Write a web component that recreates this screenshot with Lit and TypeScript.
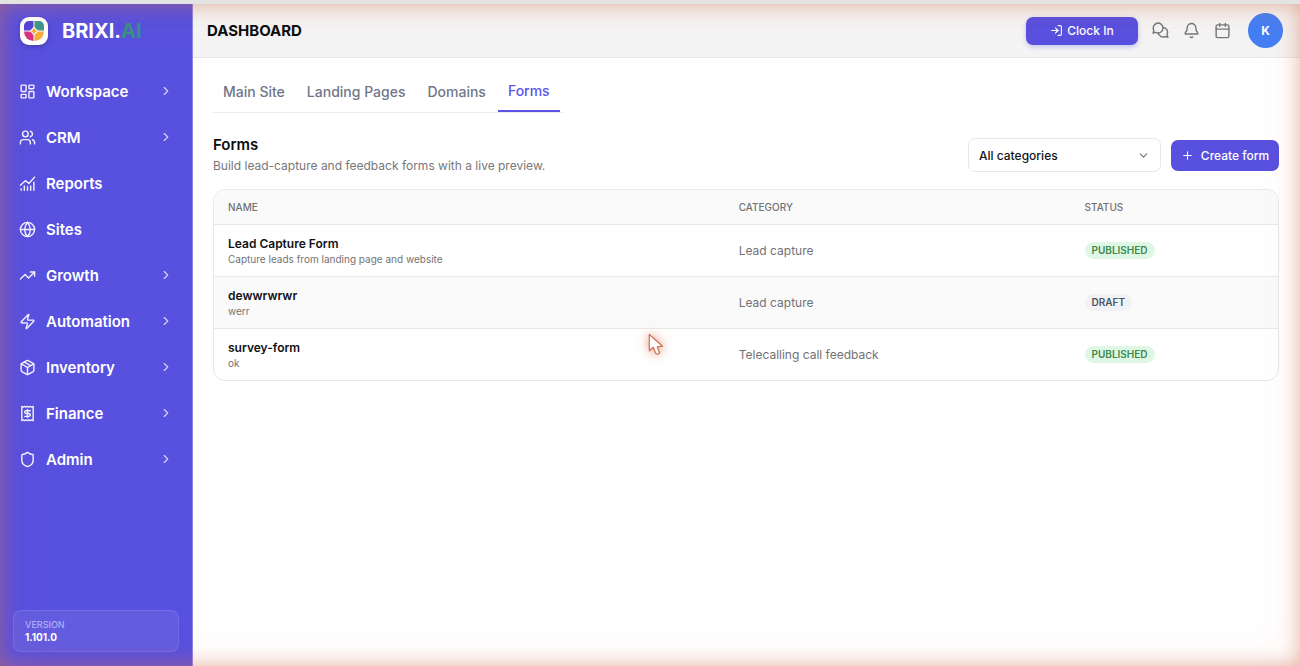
import { LitElement, html, svg, css } from "lit";
import { customElement, property, state } from "lit/decorators.js";
import { classMap } from "lit/directives/class-map.js";

const icons: Record<string, unknown> = {
  workspace: svg`<rect width="7" height="9" x="3" y="3" rx="1"/><rect width="7" height="5" x="14" y="3" rx="1"/><rect width="7" height="9" x="14" y="12" rx="1"/><rect width="7" height="5" x="3" y="16" rx="1"/>`,
  crm: svg`<path d="M16 21v-2a4 4 0 0 0-4-4H6a4 4 0 0 0-4 4v2"/><circle cx="9" cy="7" r="4"/><path d="M22 21v-2a4 4 0 0 0-3-3.87"/><path d="M16 3.13a4 4 0 0 1 0 7.75"/>`,
  reports: svg`<path d="M2 14.5 9 8l5 4 8-9"/><path d="M3 21.500v-2M7.500 21.500v-6M12 21.500v-5M16.500 21.500v-6M21 21.500V10"/>`,
  sites: svg`<circle cx="12" cy="12" r="10"/><path d="M12 2a14.5 14.5 0 0 0 0 20 14.500 14.500 0 0 0 0-20"/><path d="M2 12h20"/>`,
  growth: svg`<path d="M22 7 13.500 15.500l-5-5L2 17"/><path d="M16 7h6v6"/>`,
  automation: svg`<path d="M4 14a1 1 0 0 1-.78-1.630l9.900-10.200a.5.5 0 0 1 .86.460l-1.920 6.020A1 1 0 0 0 13 10h7a1 1 0 0 1 .78 1.630l-9.900 10.200a.5.5 0 0 1-.86-.460l1.920-6.020A1 1 0 0 0 11 14z"/>`,
  inventory: svg`<path d="M11 21.730a2 2 0 0 0 2 0l7-4A2 2 0 0 0 21 16V8a2 2 0 0 0-1-1.730l-7-4a2 2 0 0 0-2 0l-7 4A2 2 0 0 0 3 8v8a2 2 0 0 0 1 1.730z"/><path d="M12 22V12"/><path d="M3.290 7 12 12l8.710-5"/><path d="m7.500 4.270 9 5.150"/>`,
  finance: svg`<path d="M4 2v20l2-1 2 1 2-1 2 1 2-1 2 1 2-1 2 1V2l-2 1-2-1-2 1-2-1-2 1-2-1-2 1Z"/><path d="M16 8h-6a2 2 0 1 0 0 4h4a2 2 0 1 1 0 4H8"/><path d="M12 17.500v-11"/>`,
  admin: svg`<path d="M20 13c0 5-3.500 7.500-7.660 8.950a1 1 0 0 1-.67-.010C7.500 20.500 4 18 4 13V6a1 1 0 0 1 1-1c2 0 4.500-1.200 6.240-2.720a1.170 1.170 0 0 1 1.520 0C14.510 3.810 17 5 19 5a1 1 0 0 1 1 1z"/>`,
  right: svg`<path d="m9 18 6-6-6-6"/>`,
  down: svg`<path d="m6 9 6 6 6-6"/>`,
  plus: svg`<path d="M5 12h14M12 5v14"/>`,
  login: svg`<path d="m10 17 5-5-5-5"/><path d="M15 12H3"/><path d="M15 3h4a2 2 0 0 1 2 2v14a2 2 0 0 1-2 2h-4"/>`,
  chat: svg`<path d="M15.500 8.500A6.900 6.900 0 1 0 2.700 12L1.500 15.800l3.900-1.100A6.900 6.900 0 0 0 15.500 8.500Z"/><path d="M15.400 7.700a6.900 6.900 0 0 1 5.900 10.100l1.200 3.800-3.900-1.100A6.900 6.900 0 0 1 8.700 15.400"/>`,
  bell: svg`<path d="M10.270 21a2 2 0 0 0 3.460 0"/><path d="M3.260 15.330A1 1 0 0 0 4 17h16a1 1 0 0 0 .74-1.670C19.410 13.960 18 12.500 18 8A6 6 0 0 0 6 8c0 4.500-1.410 5.960-2.740 7.330"/>`,
  calendar: svg`<path d="M8 2v4M16 2v4"/><rect width="18" height="18" x="3" y="4" rx="2"/><path d="M3 10h18"/>`,
};

@customElement("ui-icon")
class UiIcon extends LitElement {
  @property() name = "";
  static styles = css`
    :host { display: inline-flex; width: 17px; height: 17px; flex: none; }
    svg {
      width: 100%; height: 100%; overflow: visible; fill: none;
      stroke: currentColor; stroke-width: var(--stroke, 2);
      stroke-linecap: round; stroke-linejoin: round;
    }
  `;
  render() {
    return html`<svg viewBox="0 0 24 24" aria-hidden="true">${icons[this.name]}</svg>`;
  }
}

const nav = [
  { label: "Workspace", icon: "workspace", more: true },
  { label: "CRM", icon: "crm", more: true },
  { label: "Reports", icon: "reports", more: false },
  { label: "Sites", icon: "sites", more: false },
  { label: "Growth", icon: "growth", more: true },
  { label: "Automation", icon: "automation", more: true },
  { label: "Inventory", icon: "inventory", more: true },
  { label: "Finance", icon: "finance", more: true },
  { label: "Admin", icon: "admin", more: true },
];

@customElement("app-sidebar")
class AppSidebar extends LitElement {
  static styles = css`
    :host {
      display: flex; flex-direction: column; box-sizing: border-box;
      background: #5850df; color: #fff; border-right: 1px solid #8a85e8;
    }
    .brand { display: flex; align-items: center; gap: 14px; height: 54px; padding: 0 20px; }
    .logo { width: 28px; height: 28px; border-radius: 9px; background: #fff; box-shadow: 0 2px 4px rgb(0 0 0 / 20%); }
    .word { font-size: 20px; font-weight: 700; line-height: 24px; }
    .ai { color: #36927f; }
    nav { display: flex; flex-direction: column; padding: 10px 0; }
    .item {
      display: flex; align-items: center; gap: 10px; height: 46px; padding: 0 19px;
      color: inherit; text-decoration: none; font-size: 15px; font-weight: 600;
    }
    .item > span { flex: 1; }
    .lead { opacity: 0.92; }
    .more { width: 14px; height: 14px; opacity: 0.75; }
    .version {
      margin: auto 13px 14px 13px; padding: 7px 11px; border-radius: 8px;
      border: 1px solid rgb(255 255 255 / 10%); background: rgb(255 255 255 / 7%);
      display: flex; flex-direction: column;
    }
    .key { font-size: 9px; line-height: 13px; color: #b3affa; font-weight: 500; }
    .val { font-size: 10px; line-height: 13px; font-weight: 700; }
  `;
  render() {
    return html`
      <div class="brand">
        <svg class="logo" viewBox="0 0 28 28" aria-hidden="true">
          <path d="M13.500 4V13.500H4V9a5 5 0 0 1 5-5Z" fill="#5146d8"/>
          <path d="M14.500 4H19a5 5 0 0 1 5 5V13.500H14.500Z" fill="#3f978a"/>
          <path d="M4 14.500H13.500V24A9.500 9.500 0 0 1 4 14.500Z" fill="#dc2f80"/>
          <path d="M14.500 14.500H24A9.500 9.500 0 0 1 14.500 24Z" fill="#f5ae3d"/>
          <path d="M14 10.500Q14.600 13.400 17.500 14Q14.600 14.600 14 17.500Q13.400 14.600 10.500 14Q13.400 13.400 14 10.500Z" fill="#f5ae3d" stroke="#fff" stroke-width="2.200" paint-order="stroke"/>
        </svg>
        <span class="word">BRIXI.<span class="ai">AI</span></span>
      </div>
      <nav aria-label="Main">
        ${nav.map((n) => html`
          <a class="item" href="#${n.label.toLowerCase()}">
            <ui-icon class="lead" name=${n.icon}></ui-icon>
            <span>${n.label}</span>
            ${n.more ? html`<ui-icon class="more" name="right"></ui-icon>` : null}
          </a>`)}
      </nav>
      <div class="version"><span class="key">VERSION</span><span class="val">1.101.0</span></div>
    `;
  }
}

@customElement("app-topbar")
class AppTopbar extends LitElement {
  static styles = css`
    :host {
      display: flex; align-items: center; box-sizing: border-box; height: 54px;
      padding: 0 17px 0 14px; background: #f4f4f4; border-bottom: 1px solid #e7e7e7;
    }
    h1 { flex: 1; margin: 0; font-size: 15px; line-height: 20px; font-weight: 700; color: #0d0d10; }
    button { font: inherit; border: 0; padding: 0; cursor: pointer; display: flex; align-items: center; justify-content: center; }
    .clock {
      width: 112px; height: 28px; gap: 4px; border-radius: 7px; color: #fff; background: #5850df;
      font-size: 12px; font-weight: 500; box-shadow: 0 2px 5px rgb(88 80 223 / 30%);
    }
    .clock ui-icon { width: 13px; height: 13px; }
    .tools { display: flex; gap: 14px; margin: 0 17px 0 14px; }
    .tool { background: none; color: #77777a; }
    .avatar { width: 35px; height: 35px; border-radius: 50%; background: #437ef5; color: #fff; font-size: 12px; font-weight: 700; }
  `;
  render() {
    return html`
      <h1>DASHBOARD</h1>
      <button class="clock"><ui-icon name="login"></ui-icon>Clock In</button>
      <div class="tools">
        <button class="tool" aria-label="Messages"><ui-icon name="chat"></ui-icon></button>
        <button class="tool" aria-label="Notifications"><ui-icon name="bell"></ui-icon></button>
        <button class="tool" aria-label="Calendar"><ui-icon name="calendar"></ui-icon></button>
      </div>
      <button class="avatar">K</button>
    `;
  }
}

const forms = [
  { name: "Lead Capture Form", note: "Capture leads from landing page and website", category: "Lead capture", status: "PUBLISHED" },
  { name: "dewwrwrwr", note: "werr", category: "Lead capture", status: "DRAFT" },
  { name: "survey-form", note: "ok", category: "Telecalling call feedback", status: "PUBLISHED" },
];

@customElement("forms-page")
class FormsPage extends LitElement {
  @state() private tab = "Forms";
  static styles = css`
    :host { display: block; padding: 14px 21px 20px 20px; }
    .tabs { display: flex; width: fit-content; gap: 2px; padding-right: 3px; border-bottom: 1px solid #ebebed; }
    .tab {
      font: inherit; font-size: 14px; font-weight: 500; line-height: 20px; color: #70768a;
      background: none; border: 0; padding: 10px; cursor: pointer;
    }
    .tab.active { color: #5b52e6; padding: 9px 10px 11px; box-shadow: inset 0 -2px #5b52e6; }
    .head { display: flex; align-items: center; gap: 10px; margin: 21px 0 13px; }
    .intro { flex: 1; }
    h2 { margin: 0; font-size: 15px; line-height: 22px; font-weight: 600; color: #0d0d10; }
    p { margin: 0; font-size: 12px; line-height: 20px; color: #777779; }
    .pick { display: grid; align-items: center; width: 193px; }
    .pick > * { grid-area: 1 / 1; }
    .pick ui-icon { justify-self: end; width: 13px; height: 13px; margin-right: 11px; color: #727274; pointer-events: none; }
    select {
      appearance: none; font: inherit; font-size: 12px; font-weight: 500; color: #141417;
      height: 34px; padding: 0 10px; border: 1px solid #e8e8ea; border-radius: 7px; background: #fff;
    }
    .create {
      display: flex; align-items: center; justify-content: center; gap: 7px; width: 108px; height: 31px; padding: 0; border: 0; white-space: nowrap;
      border-radius: 7px; background: #5850df; color: #fff; font: inherit; font-size: 12px; font-weight: 500; cursor: pointer;
    }
    .create ui-icon { width: 13px; height: 13px; }
    .card { border: 1px solid #e8e8ea; border-radius: 12px; overflow: hidden; }
    table { width: 100%; border-collapse: separate; border-spacing: 0; table-layout: fixed; text-align: left; }
    .c1 { width: 48%; }
    .c2 { width: 32.5%; }
    th { height: 34px; padding: 0 14px; background: #fafafa; color: #727274; font-size: 10px; font-weight: 500; }
    td { height: 51px; padding: 0 14px; border-top: 1px solid #e8e8ea; font-size: 12px; color: #727274; }
    tr:nth-child(2) td { background: #fafafa; }
    .name { font-size: 12px; line-height: 16px; font-weight: 600; color: #111114; }
    .note { font-size: 10px; line-height: 14px; }
    .badge {
      display: inline-block; padding: 0 7px; line-height: 17px; border-radius: 9px;
      font-size: 10px; font-weight: 600; color: #3c8a4c; background: #dff8e5; vertical-align: middle;
    }
    .badge.draft { color: #4c5567; background: #f1f2f5; }
  `;
  render() {
    return html`
      <div class="tabs" role="tablist">
        ${["Main Site", "Landing Pages", "Domains", "Forms"].map((t) => html`
          <button role="tab" aria-selected=${t === this.tab}
            class=${classMap({ tab: true, active: t === this.tab })}
            @click=${() => (this.tab = t)}>${t}</button>`)}
      </div>
      <div class="head">
        <div class="intro">
          <h2>Forms</h2>
          <p>Build lead-capture and feedback forms with a live preview.</p>
        </div>
        <label class="pick">
          <select aria-label="Category">
            <option>All categories</option>
            <option>Lead capture</option>
            <option>Telecalling call feedback</option>
          </select>
          <ui-icon name="down"></ui-icon>
        </label>
        <button class="create"><ui-icon name="plus"></ui-icon>Create form</button>
      </div>
      <div class="card">
        <table>
          <colgroup><col class="c1"><col class="c2"><col></colgroup>
          <thead><tr><th scope="col">NAME</th><th scope="col">CATEGORY</th><th scope="col">STATUS</th></tr></thead>
          <tbody>
            ${forms.map((f) => html`<tr>
              <td><div class="name">${f.name}</div><div class="note">${f.note}</div></td>
              <td>${f.category}</td>
              <td><span class=${classMap({ badge: true, draft: f.status === "DRAFT" })}>${f.status}</span></td>
            </tr>`)}
          </tbody>
        </table>
      </div>
    `;
  }
}

@customElement("app-root")
class AppRoot extends LitElement {
  static styles = css`
    :host {
      display: grid; grid-template-columns: 193px minmax(0, 1fr); grid-template-rows: 4px 1fr;
      min-height: 100vh; position: relative; background: #fff;
      font-family: Inter, "Liberation Sans", sans-serif;
    }
    .strip { grid-column: 1 / -1; background: #e3e3e1; }
    .glow {
      position: absolute; inset: 4px 0 0 0; pointer-events: none;
      box-shadow: inset 0 0 20px rgb(211 112 78 / 52%), inset 0 0 50px rgb(211 112 78 / 8%);
    }
    .pointer {
      position: absolute; left: 645px; top: 331px; width: 22px; height: 26px; overflow: visible; pointer-events: none;
      filter: drop-shadow(0 0 4px rgb(217 110 75 / 60%)) drop-shadow(0 0 8px rgb(217 110 75 / 20%));
    }
  `;
  render() {
    return html`
      <div class="strip"></div>
      <app-sidebar></app-sidebar>
      <main>
        <app-topbar></app-topbar>
        <forms-page></forms-page>
      </main>
      <div class="glow"></div>
      <svg class="pointer" viewBox="0 0 22 26" aria-hidden="true">
        <path d="M4.300 3.500V19.800L8.300 16.300L11 22.700Q12.600 23.700 14.600 22L12.200 15.800L17.600 15.200Z"
          fill="#fff" stroke="#d0714f" stroke-width="1.200" stroke-linejoin="round"/>
      </svg>
    `;
  }
}
